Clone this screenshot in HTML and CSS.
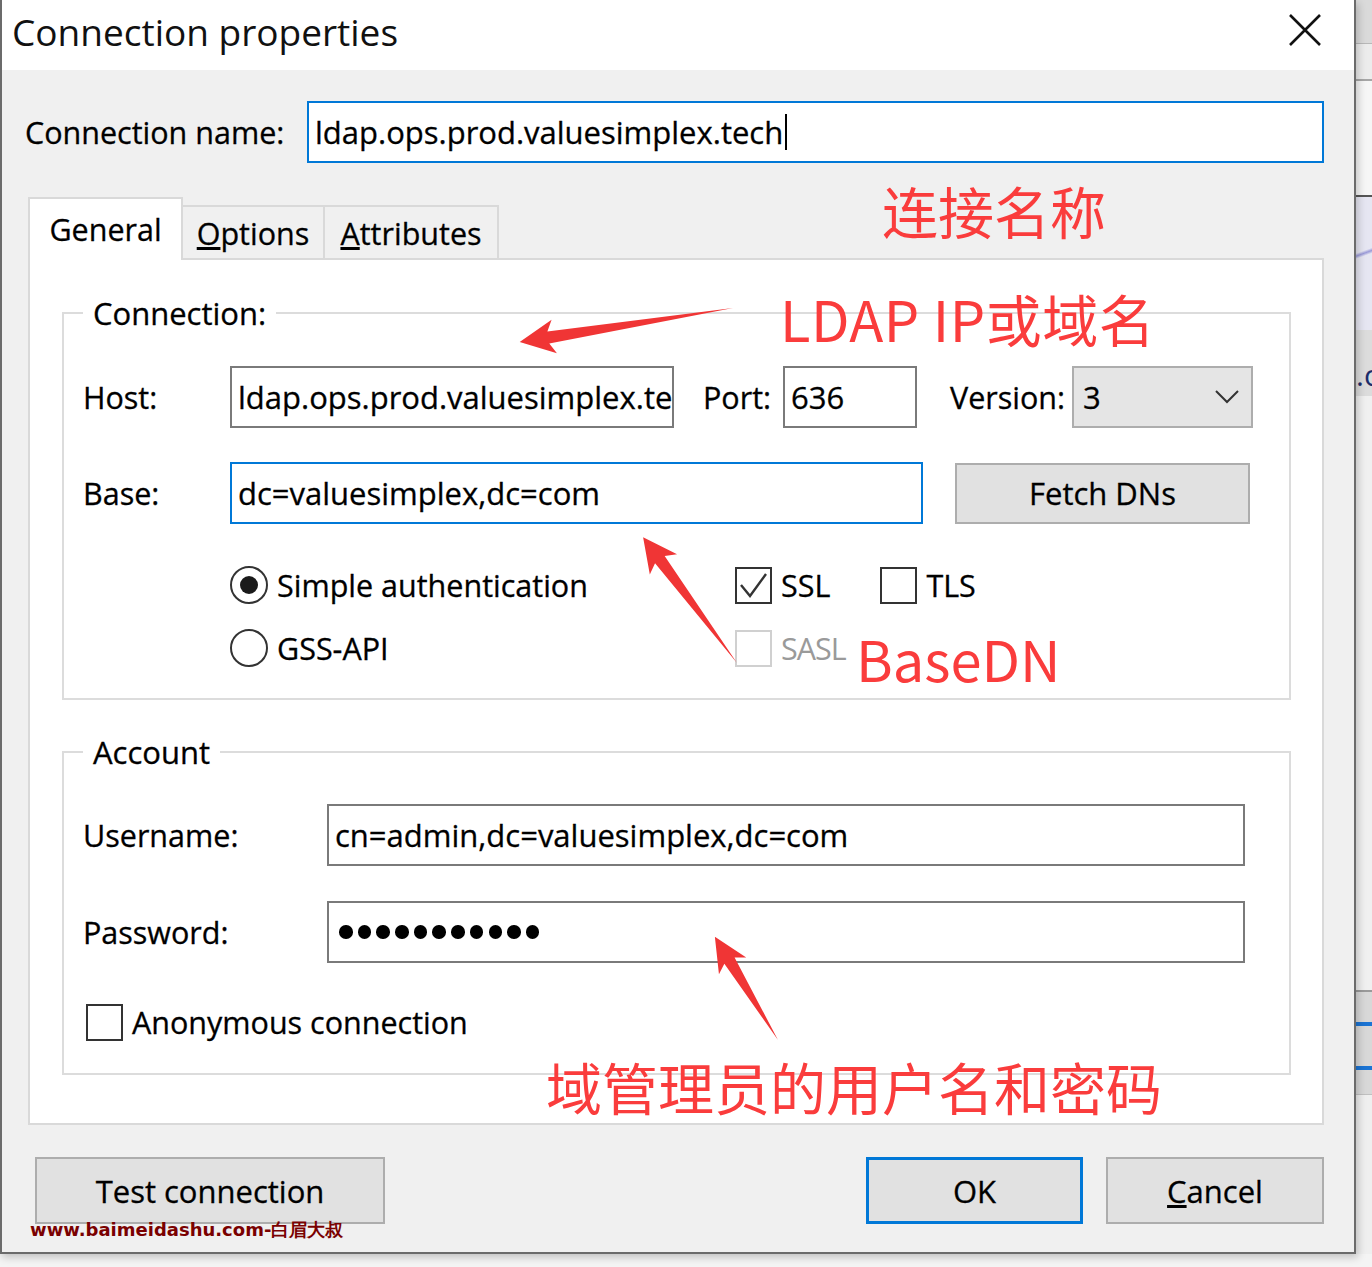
FILE: index.html
```html
<!DOCTYPE html>
<html>
<head>
  <meta charset="utf-8">
  <title>Connection properties</title>
  <link rel="stylesheet" href="styles.css">
</head>
<body>
  <div class="screen">
    <div class="dialog">
      <div class="titlebar">
        <span class="title">Connection properties</span>
        <svg class="close" width="32" height="32" viewBox="0 0 32 32">
          <path d="M1 1 L31 31 M31 1 L1 31" stroke="#111" stroke-width="2.6" fill="none"/>
        </svg>
      </div>

      <div class="content">
        <div class="name-row">
          <span class="name-label">Connection name:</span>
          <div class="field focus name-field">ldap.ops.prod.valuesimplex.tech<span class="caret"></span></div>
        </div>

        <ul class="nav">
          <li class="active">General</li>
          <li class="tab-options"><u>O</u>ptions</li>
          <li class="tab-attrs"><u>A</u>ttributes</li>
        </ul>
        <div class="tab-panel">
          <fieldset class="group">
            <legend>Connection:</legend>
            <div class="group-body conn-body">
              <div class="row">
                <span class="label host-label">Host:</span>
                <div class="field host">ldap.ops.prod.valuesimplex.tech</div>
                <span class="label port-label">Port:</span>
                <div class="field port">636</div>
                <span class="label version-label">Version:</span>
                <div class="select">
                  <span>3</span>
                  <svg width="24" height="14" viewBox="0 0 24 14"><polyline points="1,1 12,12 23,1" stroke="#333" stroke-width="2" fill="none"/></svg>
                </div>
              </div>
              <div class="row base-row">
                <span class="label host-label">Base:</span>
                <div class="field focus base">dc=valuesimplex,dc=com</div>
                <div class="btn fetch">Fetch DNs</div>
              </div>
              <div class="options">
                <div class="radios">
                  <div class="opt"><span class="radio on"></span>Simple authentication</div>
                  <div class="opt opt-second"><span class="radio"></span>GSS-API</div>
                </div>
                <div class="checks">
                  <div class="check-row">
                    <div class="opt"><span class="check"><svg width="33" height="33" viewBox="0 0 33 33"><polyline points="4,16 13,27 29,5" stroke="#333" stroke-width="2.4" fill="none"/></svg></span>SSL</div>
                    <div class="opt tls"><span class="check"></span>TLS</div>
                  </div>
                  <div class="opt opt-second disabled"><span class="check"></span>SASL</div>
                </div>
              </div>
            </div>
          </fieldset>

          <fieldset class="group account">
            <legend>Account</legend>
            <div class="group-body account-body">
              <div class="row">
                <span class="label user-label">Username:</span>
                <div class="field wide">cn=admin,dc=valuesimplex,dc=com</div>
              </div>
              <div class="row pass-row">
                <span class="label user-label">Password:</span>
                <div class="field wide dots">
                  <span class="dot"></span><span class="dot"></span><span class="dot"></span><span class="dot"></span>
                  <span class="dot"></span><span class="dot"></span><span class="dot"></span><span class="dot"></span>
                  <span class="dot"></span><span class="dot"></span><span class="dot"></span>
                </div>
              </div>
              <div class="opt anon"><span class="check"></span>Anonymous connection</div>
            </div>
          </fieldset>
        </div>

        <div class="buttons">
          <div class="btn test">Test connection</div>
          <div class="btn ok">OK</div>
          <div class="btn cancel"><u>C</u>ancel</div>
        </div>
      </div>
    </div>

    <!-- window behind the dialog -->
    <div class="backdrop">
      <div class="band b1"></div>
      <div class="band b2"></div>
      <div class="band b3"></div>
      <div class="band b4"></div>
      <div class="band b5">.c</div>
      <div class="band b6"></div>
      <div class="band b7"></div>
      <div class="band b8"></div>
    </div>

    <!-- red annotations drawn over the screenshot -->
    <div class="notes">
      <svg class="arrows" width="1372" height="1267" viewBox="0 0 1372 1267">
        <polygon transform="translate(733 308) rotate(170.93)" points="0,0 187,-6 181,-17 216,0 181,17 187,6"/>
        <polygon transform="translate(737 663) rotate(-126.73)" points="0,0 129,-6 123,-17 157,0 123,17 129,6"/>
        <polygon transform="translate(778 1040) rotate(-121.45)" points="0,0 93,-6 87,-16 121,0 87,16 93,6"/>
      </svg>
      <span class="note note-name">连接名称</span>
      <span class="note note-host">LDAP IP或域名</span>
      <span class="note note-base">BaseDN</span>
      <span class="note note-account">域管理员的用户名和密码</span>
      <span class="watermark">www.baimeidashu.com-白眉大叔</span>
    </div>
  </div>
</body>
</html>
```

FILE: styles.css
```css
body {
    margin: 0;
    background: #f4f4f4;
    font-family: "Open Sans", "Noto Sans", Arial, sans-serif;
    font-size: 30.5px;
    color: #000;
}

.screen {
    position: relative;
    display: flex;
    align-items: flex-start;
    width: 1372px;
    height: 1267px;
    overflow: hidden;
}

/* dialog frame */

.dialog {
    position: relative;
    z-index: 1;
    width: 1356px;
    height: 1254px;
    flex: none;
    box-sizing: border-box;
    border: 2px solid #6b6b6b;
    border-top: none;
    background: #f0f0f0;
    display: flex;
    flex-direction: column;
    box-shadow: 2px 3px 8px rgba(0, 0, 0, 0.22);
    -webkit-text-stroke: 0.3px #000;
}

.titlebar {
    height: 70px;
    flex: none;
    background: #fff;
    display: flex;
    align-items: center;
    justify-content: space-between;
    padding: 0 33px 0 10px;
}

.title {
    font-size: 37px;
    color: #111;
    margin-top: -8px;
    -webkit-text-stroke: 0;
}

.close {
    margin-top: -10px;
}

.content {
    flex: 1;
    padding: 31px 30px 0 26px;
}

/* text fields */

.field {
    height: 62px;
    box-sizing: border-box;
    border: 2px solid #7a7a7a;
    background: #fff;
    padding: 0 6px;
    display: flex;
    align-items: center;
    white-space: nowrap;
    overflow: hidden;
    font-size: 31px;
}

.field.focus {
    border-color: #0078d7;
}

.caret {
    display: inline-block;
    width: 2px;
    height: 36px;
    margin-left: 2px;
    background: #000;
}

.name-row {
    display: flex;
    align-items: center;
}

.name-label {
    width: 282px;
    margin-left: -3px;
}

.name-field {
    flex: 1;
}

/* tabs */

.nav {
    display: flex;
    align-items: flex-end;
    margin: 34px 0 0;
    padding: 0;
    list-style: none;
}

.nav li {
    height: 53px;
    box-sizing: border-box;
    border: 2px solid #d9d9d9;
    border-left: none;
    border-bottom: none;
    background: #f0f0f0;
    display: flex;
    align-items: center;
    justify-content: center;
}

.nav li.active {
    width: 155px;
    height: 63px;
    margin-bottom: -2px;
    border-left: 2px solid #d9d9d9;
    background: #fff;
    position: relative;
    z-index: 1;
    padding-bottom: 2px;
}

.tab-options {
    width: 142px;
}

.tab-attrs {
    width: 174px;
}

.tab-panel {
    background: #fff;
    border: 2px solid #d9d9d9;
    padding: 33px 31px 48px 32px;
}

/* group boxes */

.group {
    margin: 0;
    padding: 0;
    min-width: 0;
    border: 2px solid #dcdcdc;
}

.group legend {
    margin-left: 19px;
    padding: 0 10px;
    line-height: 40px;
    font-size: 31px;
}

.account {
    margin-top: 32px;
}

.group-body {
    padding-left: 19px;
}

.conn-body {
    padding-top: 33px;
    padding-bottom: 30px;
}

.account-body {
    padding-top: 32px;
    padding-bottom: 32px;
}

.row {
    display: flex;
    align-items: center;
}

.label {
    flex: none;
}

.host-label {
    width: 147px;
}

.host {
    width: 444px;
}

.port-label {
    width: 80px;
    margin-left: 29px;
}

.port {
    width: 134px;
}

.version-label {
    width: 122px;
    margin-left: 33px;
}

.select {
    width: 181px;
    height: 62px;
    box-sizing: border-box;
    border: 2px solid #adadad;
    background: #e5e5e5;
    display: flex;
    align-items: center;
    justify-content: space-between;
    padding: 0 12px 0 9px;
    font-size: 31px;
}

.base-row {
    margin-top: 34px;
}

.base {
    width: 693px;
}

.user-label {
    width: 244px;
}

.wide {
    width: 918px;
}

.pass-row {
    margin-top: 35px;
}

.dots {
    padding-left: 10px;
    gap: 5.2px;
}

.dot {
    width: 13.5px;
    height: 13.5px;
    border-radius: 50%;
    background: #000;
    flex: none;
}

/* buttons */

.btn {
    height: 67px;
    box-sizing: border-box;
    border: 2px solid #adadad;
    background: #e1e1e1;
    display: flex;
    align-items: center;
    justify-content: center;
    font-size: 31px;
}

.fetch {
    width: 295px;
    height: 61px;
    margin-left: 32px;
}

.buttons {
    display: flex;
    margin-top: 32px;
}

.test {
    width: 350px;
    margin-left: 7px;
}

.ok {
    width: 217px;
    margin-left: auto;
    border: 3px solid #0078d7;
}

.cancel {
    width: 218px;
    margin-left: 23px;
}

/* radios and checkboxes */

.options {
    display: flex;
    margin-top: 41px;
    padding-left: 147px;
}

.radios {
    width: 505px;
}

.opt {
    display: flex;
    align-items: center;
    height: 40px;
    white-space: nowrap;
}

.opt-second {
    margin-top: 23px;
}

.radio {
    width: 38px;
    height: 38px;
    box-sizing: border-box;
    border: 2.5px solid #333;
    border-radius: 50%;
    margin-right: 9px;
    background: #fff;
    display: flex;
    align-items: center;
    justify-content: center;
}

.radio.on::after {
    content: "";
    width: 18px;
    height: 18px;
    border-radius: 50%;
    background: #1a1a1a;
}

.check {
    width: 37px;
    height: 37px;
    box-sizing: border-box;
    border: 2.5px solid #333;
    background: #fff;
    margin-right: 9px;
    flex: none;
}

.check-row {
    display: flex;
}

.tls {
    margin-left: 50px;
}

.disabled {
    color: #9a9a9a;
    -webkit-text-stroke: 0;
    letter-spacing: -1px;
}

.disabled .check {
    border-color: #d0d0d0;
}

.anon {
    margin-top: 40px;
    margin-left: 3px;
    height: 38px;
}

/* window behind */

.backdrop {
    flex: 1;
    height: 1254px;
    display: flex;
    flex-direction: column;
    background: #f0f0f0;
}

.band {
    box-sizing: border-box;
}

.b1 {
    height: 44px;
    background: #dadada;
    border-bottom: 1px solid #b8b8b8;
}

.b2 {
    height: 37px;
    background: #ececec;
    border-bottom: 2px solid #a6a6a6;
}

.b3 {
    height: 116px;
    background: #f6f6f6;
    border-bottom: 2px solid #555;
}

.b4 {
    height: 133px;
    background: linear-gradient(160deg, #e6e6f2 40%, #9a9ad8 42%, #e6e6f2 44%);
}

.b5 {
    height: 66px;
    background: #dcdcdc;
    font-size: 30px;
    line-height: 90px;
    color: #1c2d6b;
    overflow: hidden;
}

.b6 {
    height: 596px;
    background: #f0f0f0;
    border-bottom: 2px solid #9a9a9a;
}

.b7 {
    height: 102px;
    background: #d8d8d8;
    border-top: 30px solid #d8d8d8;
    background-image: linear-gradient(#1b74d4, #1b74d4), linear-gradient(#1b74d4, #1b74d4);
    background-size: 100% 4px, 100% 4px;
    background-position: 0 0, 0 44px;
    background-repeat: no-repeat;
}

.b8 {
    flex: 1;
    background: #efefef;
    border-top: 1px solid #c0c0c0;
}

/* annotations */

.notes {
    position: absolute;
    inset: 0;
    z-index: 2;
    pointer-events: none;
}

.arrows {
    position: absolute;
    left: 0;
    top: 0;
}

.arrows polygon {
    fill: #f03535;
}

.note {
    position: absolute;
    font-family: "Noto Sans CJK SC", sans-serif;
    font-size: 56px;
    line-height: 1;
    color: #fa3c3c;
    white-space: nowrap;
}

.note-name {
    left: 882px;
    top: 182px;
}

.note-host {
    left: 780px;
    top: 290px;
    letter-spacing: 0.5px;
}

.note-base {
    left: 856px;
    top: 630px;
}

.note-account {
    left: 546px;
    top: 1058px;
}

.watermark {
    position: absolute;
    left: 30px;
    top: 1218px;
    font-family: "DejaVu Sans", sans-serif;
    font-weight: bold;
    font-size: 18px;
    color: #7a0000;
    white-space: nowrap;
}
```
